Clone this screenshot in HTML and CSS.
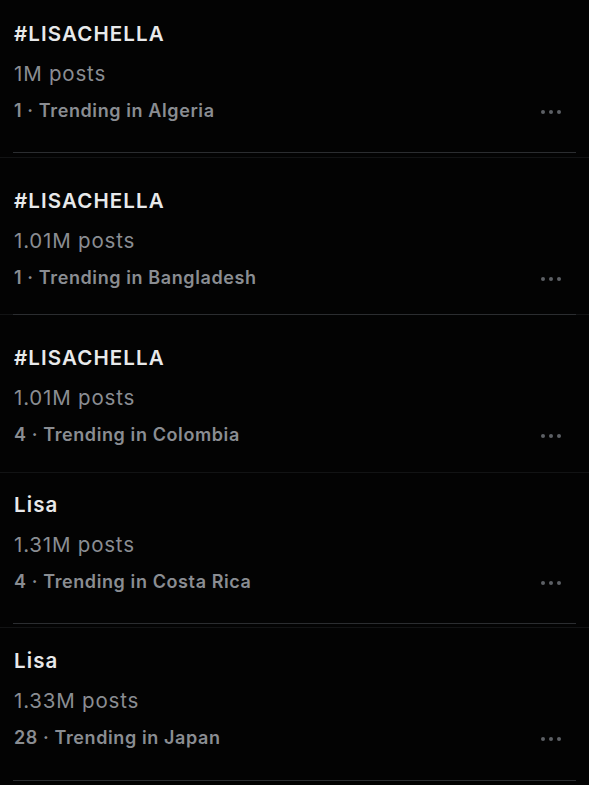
FILE: index.html
```html
<!DOCTYPE html>
<html>
<head>
<meta charset="utf-8">
<link rel="stylesheet" href="styles.css">
</head>
<body>
<div class="feed">
  <section class="seg seg-a">
    <div class="item">
      <div class="title">#LISACHELLA</div>
      <div class="posts">1M posts</div>
      <div class="trend-row"><span class="trend">1 · Trending in Algeria</span><span class="dots"><i></i><i></i><i></i></span></div>
    </div>
    <div class="fill"></div>
    <div class="inset"></div>
    <div class="gap4"></div>
    <div class="seam"></div>
  </section>
  <section class="seg seg-b">
    <div class="item">
      <div class="title">#LISACHELLA</div>
      <div class="posts">1.01M posts</div>
      <div class="trend-row"><span class="trend">1 · Trending in Bangladesh</span><span class="dots"><i></i><i></i><i></i></span></div>
    </div>
    <div class="fill"></div>
    <div class="seam with-inset"><div class="inset"></div></div>
  </section>
  <section class="seg seg-c">
    <div class="item">
      <div class="title">#LISACHELLA</div>
      <div class="posts">1.01M posts</div>
      <div class="trend-row"><span class="trend">4 · Trending in Colombia</span><span class="dots"><i></i><i></i><i></i></span></div>
    </div>
    <div class="fill"></div>
    <div class="seam"></div>
  </section>
  <section class="seg seg-d">
    <div class="item">
      <div class="title">Lisa</div>
      <div class="posts">1.31M posts</div>
      <div class="trend-row"><span class="trend">4 · Trending in Costa Rica</span><span class="dots"><i></i><i></i><i></i></span></div>
    </div>
    <div class="fill"></div>
    <div class="inset"></div>
    <div class="gap3"></div>
    <div class="seam"></div>
  </section>
  <section class="seg seg-e">
    <div class="item">
      <div class="title">Lisa</div>
      <div class="posts">1.33M posts</div>
      <div class="trend-row"><span class="trend">28 · Trending in Japan</span><span class="dots"><i></i><i></i><i></i></span></div>
    </div>
    <div class="fill"></div>
    <div class="inset"></div>
    <div class="gap4"></div>
  </section>
</div>
</body>
</html>
```
FILE: styles.css
```css
html, body {
  margin: 0;
  padding: 0;
  background: #030303;
}
body {
  font-family: Inter, "Noto Sans", "Liberation Sans", sans-serif;
  width: 589px;
  height: 785px;
  overflow: hidden;
}
.feed {
  display: flex;
  flex-direction: column;
}
.seg {
  display: flex;
  flex-direction: column;
}
.seg-a { height: 158px; }
.seg-b { height: 157px; }
.seg-c { height: 158px; }
.seg-d { height: 155px; }
.seg-e { height: 157px; }
.seg-a .item { padding-top: 22px; }
.seg-b .item { padding-top: 31px; }
.seg-c .item { padding-top: 31px; }
.seg-d .item { padding-top: 20px; }
.seg-e .item { padding-top: 21px; }
.item {
  padding-left: 14px;
  padding-right: 28px;
}
.title {
  height: 24px;
  line-height: 24px;
  font-size: 20.5px;
  font-weight: 600;
  letter-spacing: 1.1px;
  color: #e8e9ea;
}
.posts {
  margin-top: 16px;
  height: 24px;
  line-height: 24px;
  font-size: 20.5px;
  font-weight: 400;
  letter-spacing: 0.8px;
  color: #8a8d92;
}
.trend-row {
  margin-top: 13px;
  height: 24px;
  display: flex;
  align-items: center;
  justify-content: space-between;
}
.trend {
  line-height: 24px;
  font-size: 18px;
  font-weight: 600;
  letter-spacing: 0.6px;
  color: #8a8d92;
}
.dots {
  display: flex;
  gap: 4px;
  margin-top: 1px;
}
.dots i {
  width: 4px;
  height: 4px;
  border-radius: 50%;
  background: #5d6065;
}
.fill { flex: 1; }
.inset {
  height: 1px;
  margin: 0 13px;
  background: #2b2d30;
}
.gap4 { height: 4px; }
.gap3 { height: 3px; }
.seam {
  height: 1px;
  background: #121314;
}
.seam.with-inset .inset {
  margin: 0 13px;
  background: #2b2d30;
}
```
